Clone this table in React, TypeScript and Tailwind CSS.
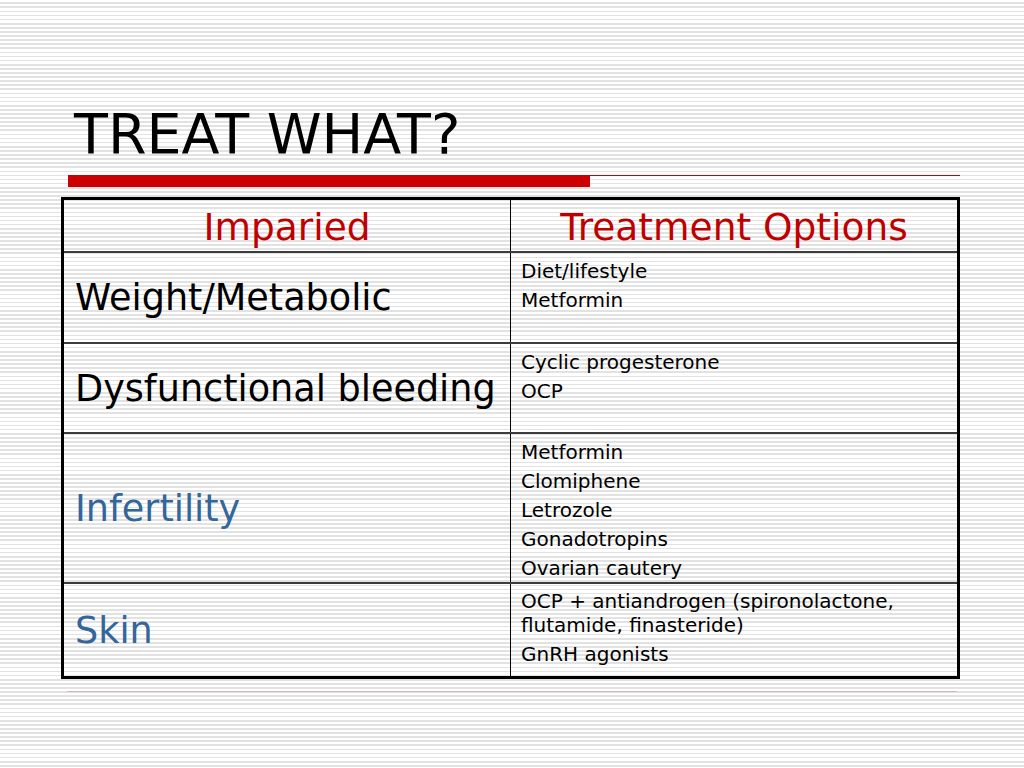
import React from "react";

const font = "font-['DejaVu_Sans','Verdana',sans-serif]";

function Small({ children }: { children: React.ReactNode }) {
  return <p className="text-[20px] leading-[24px] mb-[5px] text-black">{children}</p>;
}

export default function App() {
  return (
    <div
      className={`w-[1024px] h-[768px] overflow-hidden bg-white bg-[repeating-linear-gradient(to_bottom,#ffffff_0px,#ffffff_2.4px,#e2e2e2_2.4px,#e2e2e2_4.1px)] ${font} flex flex-col`}
    >
      <h1 className="ml-[74px] mt-[107px] text-[55.5px] leading-[54px] text-black font-normal h-[54px]">
        TREAT WHAT?
      </h1>
      <div className="mt-[14px] ml-[68px] flex items-start">
        <div className="w-[522px] h-[12px] bg-[#cc0000]" />
        <div className="w-[370px] h-[1px] bg-[#cc0000]" />
      </div>
      <div className="mt-[10px] ml-[61px] w-[899px] border-[3px] border-black flex flex-col">
        <div className="flex h-[53px] border-b-2 border-[#3c3c3c]">
          <div className="w-[447px] border-r border-black flex items-center justify-center pt-[3px] text-[37.5px] text-[#c00000]">
            Imparied
          </div>
          <div className="flex-1 flex items-center justify-center pt-[3px] text-[37.5px] text-[#c00000]">
            Treatment Options
          </div>
        </div>
        <div className="flex h-[91px] border-b-2 border-[#3c3c3c]">
          <div className="w-[447px] border-r border-black flex items-center pl-[11px] pt-[2px] text-[36.6px] text-black">
            Weight/Metabolic
          </div>
          <div className="flex-1 pl-[10px] pt-[6px]">
            <Small>Diet/lifestyle</Small>
            <Small>Metformin</Small>
          </div>
        </div>
        <div className="flex h-[90px] border-b-2 border-[#3c3c3c]">
          <div className="w-[447px] border-r border-black flex items-center pl-[11px] pt-[2px] text-[36.6px] text-black">
            Dysfunctional bleeding
          </div>
          <div className="flex-1 pl-[10px] pt-[6px]">
            <Small>Cyclic progesterone</Small>
            <Small>OCP</Small>
          </div>
        </div>
        <div className="flex h-[150px] border-b-2 border-[#3c3c3c]">
          <div className="w-[447px] border-r border-black flex items-center pl-[11px] pt-[2px] text-[36.6px] text-[#33669a]">
            Infertility
          </div>
          <div className="flex-1 pl-[10px] pt-[6px]">
            <Small>Metformin</Small>
            <Small>Clomiphene</Small>
            <Small>Letrozole</Small>
            <Small>Gonadotropins</Small>
            <Small>Ovarian cautery</Small>
          </div>
        </div>
        <div className="flex h-[92px]">
          <div className="w-[447px] border-r border-black flex items-center pl-[11px] pt-[2px] text-[36.6px] text-[#33669a]">
            Skin
          </div>
          <div className="flex-1 pl-[10px] pt-[5px]">
            <Small>
              OCP + antiandrogen (spironolactone,
              <br />
              flutamide, finasteride)
            </Small>
            <Small>GnRH agonists</Small>
          </div>
        </div>
      </div>
      <div className="mt-[12px] ml-[67px] w-[890px] h-[1px] bg-[#d4b8b8]" />
    </div>
  );
}
